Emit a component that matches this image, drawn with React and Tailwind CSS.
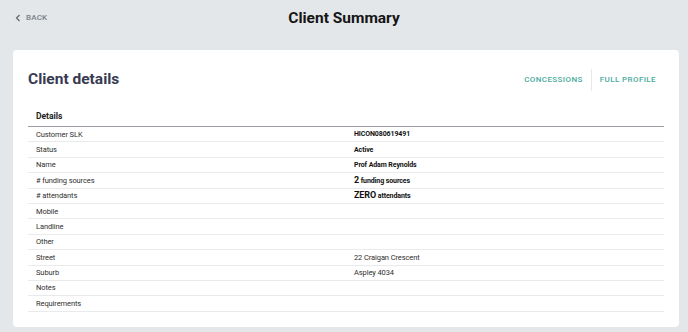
// App.jsx — Client Summary, bloc détails client

const rows = [
  { label: 'Customer SLK', value: 'HICON080619491', bold: true },
  { label: 'Status', value: 'Active', bold: true },
  { label: 'Name', value: 'Prof Adam Reynolds', bold: true },
  { label: '# funding sources', big: '2', rest: ' funding sources' },
  { label: '# attendants', big: 'ZERO', rest: ' attendants' },
  { label: 'Mobile' },
  { label: 'Landline' },
  { label: 'Other' },
  { label: 'Street', value: '22 Craigan Crescent' },
  { label: 'Suburb', value: 'Aspley 4034' },
  { label: 'Notes' },
  { label: 'Requirements' },
]

function Row({ r }) {
  return (
    <div className="grid grid-cols-2 h-[15.4px] items-center border-b border-[#e9eaec] text-[7.5px] tracking-[-0.1px] text-[#2f2f2f]">
      <div className="pl-2">{r.label}</div>
      <div className="pl-2">
        {r.big ? (
          <span className="font-bold text-[#111]">
            <span className="text-[9px]">{r.big}</span>
            <span className="text-[7px]">{r.rest}</span>
          </span>
        ) : (
          <span className={r.bold ? 'font-bold text-[7px] text-[#111]' : ''}>{r.value}</span>
        )}
      </div>
    </div>
  )
}

export default function App() {
  return (
    <div className="w-[688px] h-[332px] bg-[#e4e7ea] overflow-hidden" style={{ fontFamily: 'Roboto, "Liberation Sans", sans-serif' }}>
      {/* Barre du haut */}
      <div className="relative h-[50px] flex items-start">
        <button className="flex items-center gap-[5px] pl-[15px] pt-[12px] text-[8px] font-medium tracking-wide text-[#7a8088]">
          <svg width="6" height="8" viewBox="0 0 6 8" fill="none" stroke="#60656c" strokeWidth="1.2">
            <path d="M4.5 1 L1.5 4 L4.5 7" />
          </svg>
          BACK
        </button>
        <h1 className="absolute left-0 right-0 top-[7px] text-center text-[15.5px] font-bold text-[#151515]">Client Summary</h1>
      </div>

      {/* Carte */}
      <div className="ml-[13px] w-[666px] h-[277px] bg-white rounded-[4px] px-[15px]">
        <div className="flex items-center justify-between h-[56px] pt-[4px]">
          <h2 className="text-[15.5px] font-bold text-[#383a52]">Client details</h2>
          <div className="flex items-center text-[8px] font-medium tracking-[0.4px] text-[#4aab9d] pr-[8px]">
            <span className="pr-[8px]">CONCESSIONS</span>
            <span className="w-px h-[22px] bg-[#e6e8ea]" />
            <span className="pl-[8px]">FULL PROFILE</span>
          </div>
        </div>

        <div className="w-[636px]">
          <div className="h-[21px] flex items-center pl-2 pt-[1px] text-[8.5px] font-bold text-[#222] border-b border-[#9a9da4]">
            Details
          </div>
          {rows.map(r => <Row key={r.label} r={r} />)}
        </div>
      </div>
    </div>
  )
}
